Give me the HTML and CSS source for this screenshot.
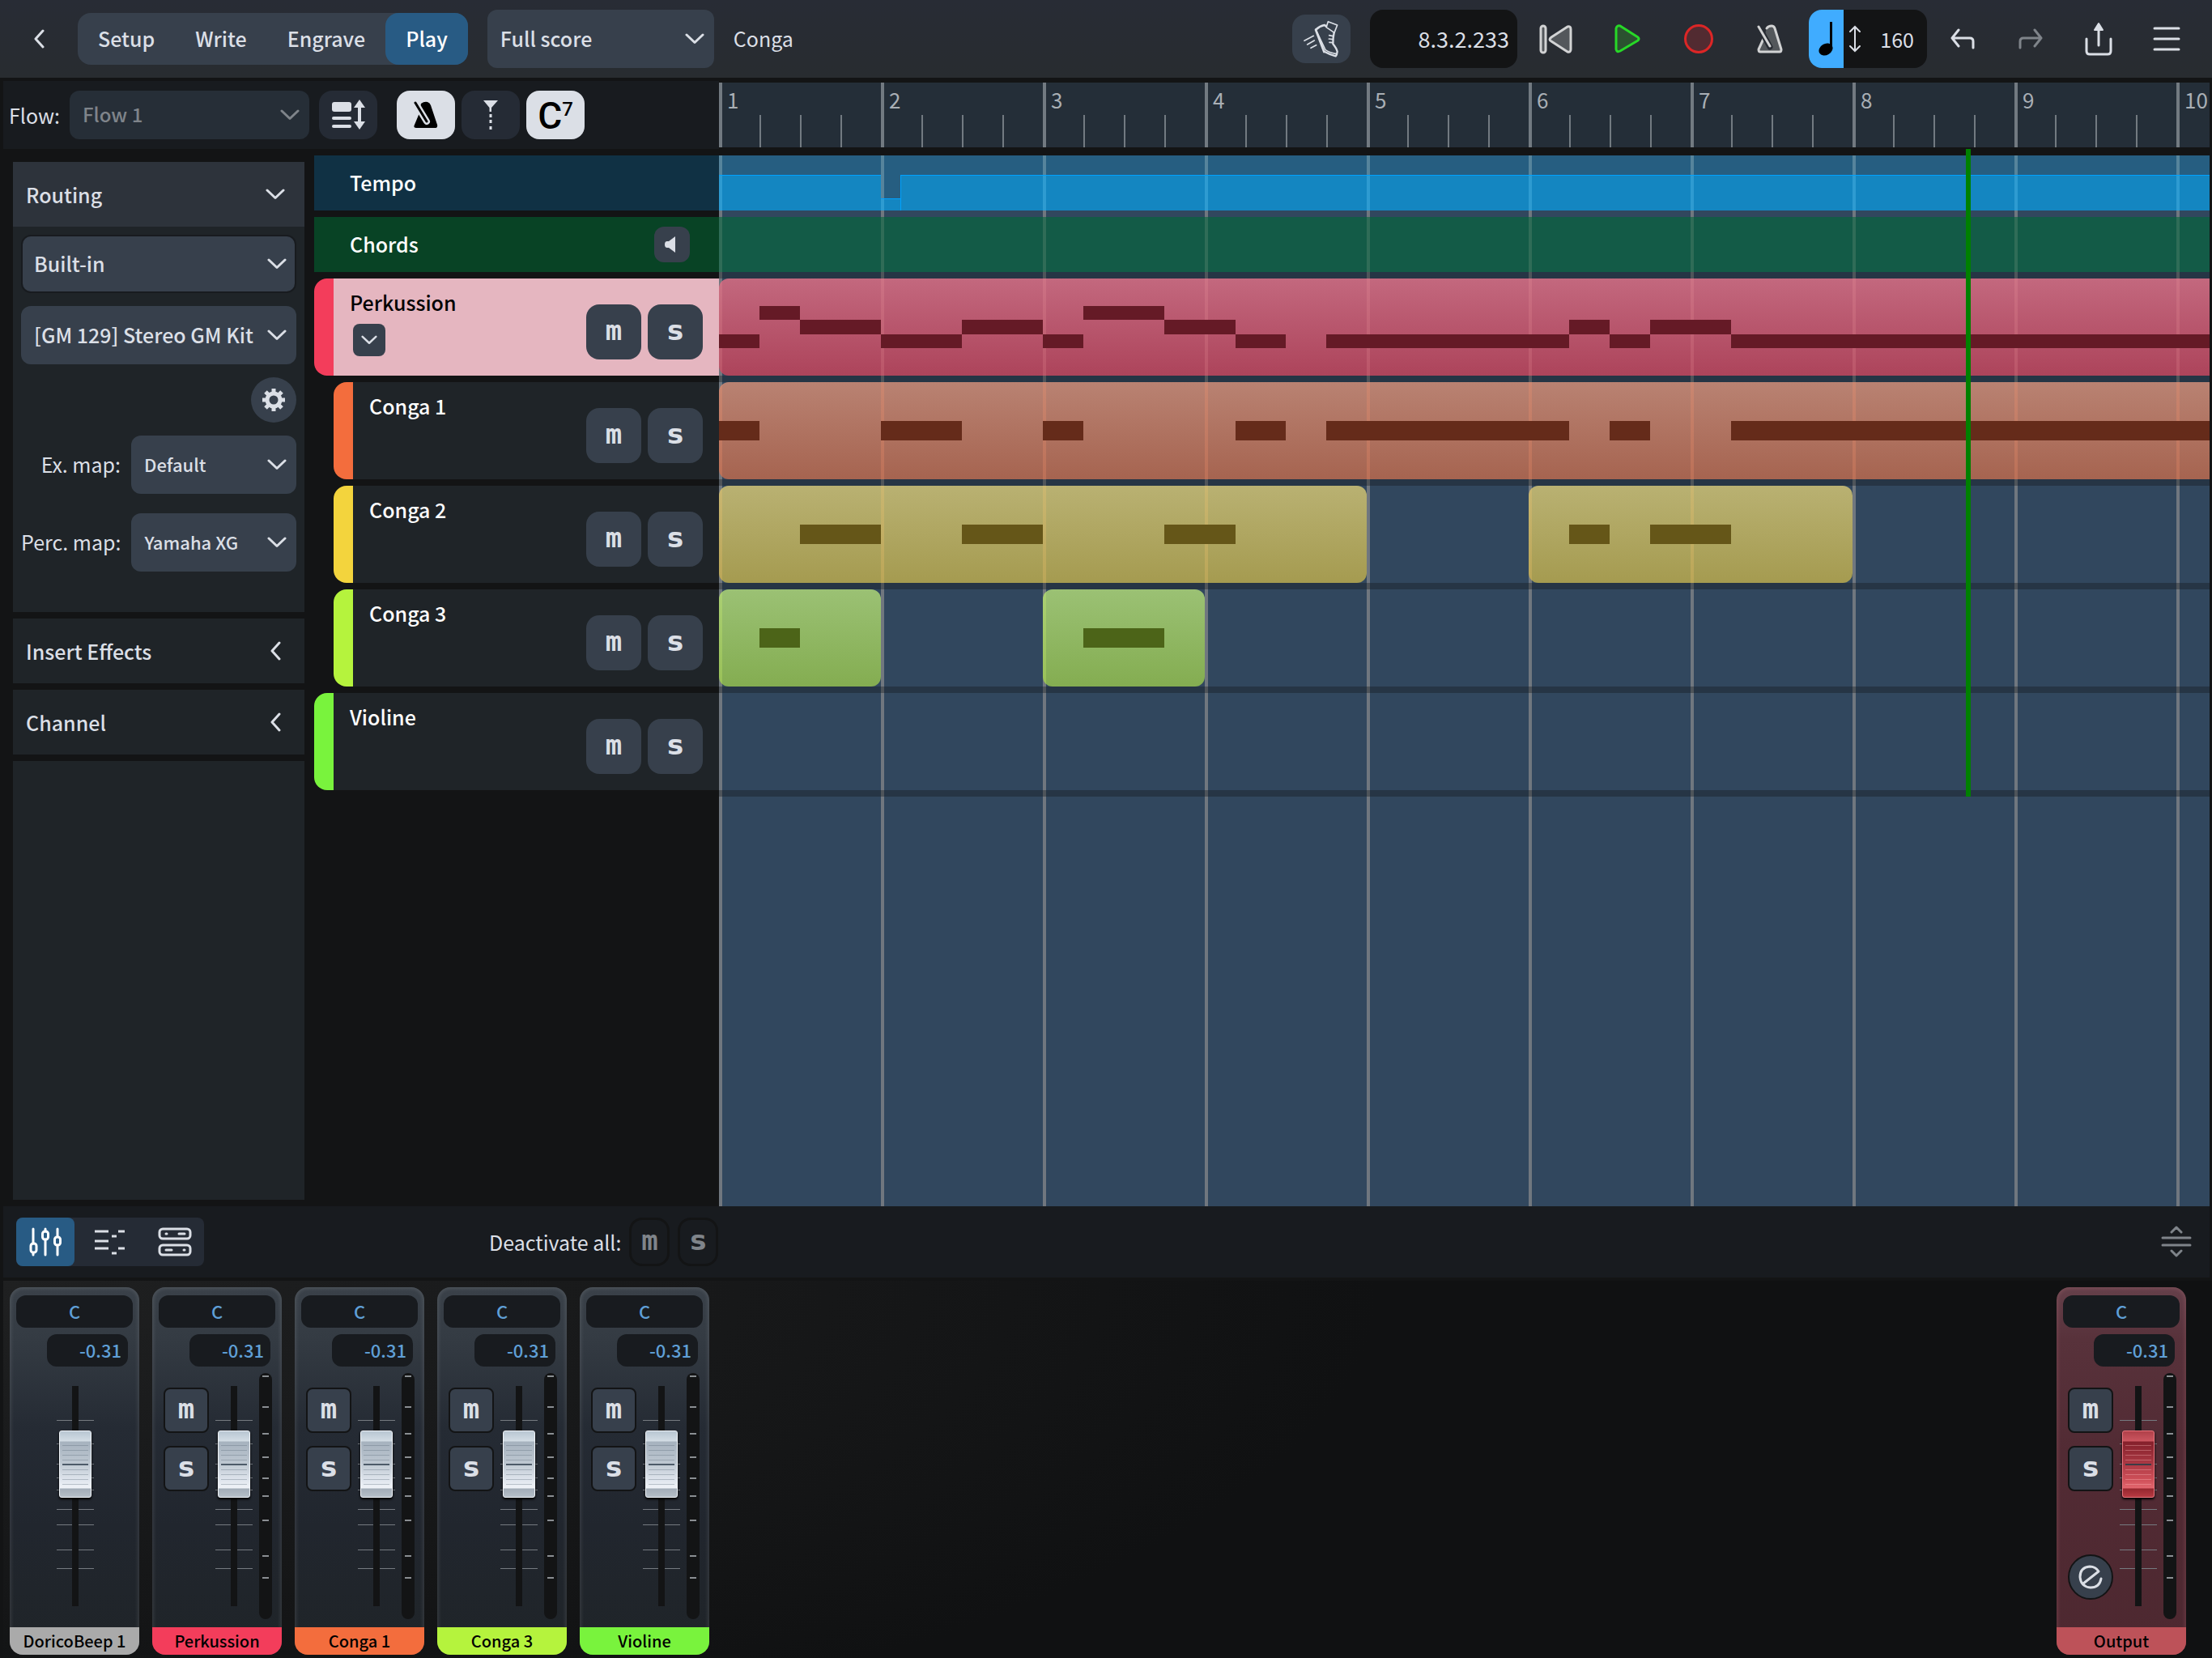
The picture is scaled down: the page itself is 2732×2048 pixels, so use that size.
FILE: index.html
```html
<!DOCTYPE html>
<html lang="en">
<head>
<meta charset="utf-8">
<title>Conga</title>
<link rel="stylesheet" href="styles.css">
</head>
<body>
<svg class="defs" aria-hidden="true">
  <symbol id="down" viewBox="0 0 24 14"><path d="M2 2l10 9.500L22 2" fill="none" stroke="currentColor" stroke-width="3" stroke-linecap="round" stroke-linejoin="round"/></symbol>
  <symbol id="left" viewBox="0 0 14 24"><path d="M12 2L3 12l9 10" fill="none" stroke="currentColor" stroke-width="3" stroke-linecap="round" stroke-linejoin="round"/></symbol>
</svg>

<header class="topbar">
  <button class="back" aria-label="Back"><svg width="14" height="24"><use href="#left"/></svg></button>
  <nav class="modes">
    <button>Setup</button><button>Write</button><button>Engrave</button><button class="active">Play</button>
  </nav>
  <div class="select layout-select">
    <select aria-label="Layout"><option>Full score</option></select>
    <svg width="24" height="14"><use href="#down"/></svg>
  </div>
  <h1 class="project">Conga</h1>

  <button class="shoe" aria-label="Jump bar">
    <svg width="46" height="46" viewBox="60 78 138 138" fill="none" stroke="#dbdfe6" stroke-linecap="round" stroke-linejoin="round"><path d="M154 83l34 13-11 28-30-20z" stroke-width="5"/><path d="M147 100l-7-4q-16 3-32 17l31 82" stroke-width="8"/><path d="M176 124q-4 18-4 42 13 16 16 28-1 12-6 17-20-5-42-17" stroke-width="7"/><path d="M108 112l36 76q14 10 38 14" stroke-width="5"/><path d="M158 134l14 3M157 147l14 2M159 160l13 1M66 154l34-18M77 168l26-15M90 181l20-11" stroke-width="5"/></svg>
  </button>
  <output class="time">8.3.2.233</output>
  <div class="transport">
    <button aria-label="Rewind"><svg width="42" height="38" viewBox="0 0 42 38" fill="#53575b" stroke="#d2d3d4" stroke-width="3" stroke-linejoin="round"><rect x="2" y="3" width="6" height="33" rx="3"/><path d="M15 17L35 4q4-1 4 3v25q0 4-4 3L15 22q-4-2 0-5z"/></svg></button>
    <button aria-label="Play"><svg width="32" height="36" viewBox="0 0 32 36" fill="#2b5230" stroke="#27d827" stroke-width="3" stroke-linejoin="round"><path d="M2 5q1-4 5-3l22 14q2 2 0 4L7 33q-4 2-5-2z"/></svg></button>
    <button aria-label="Record"><svg width="38" height="38" viewBox="0 0 38 38"><circle cx="19" cy="19" r="16.500" fill="#522b31" stroke="#dc2626" stroke-width="3"/></svg></button>
    <button aria-label="Click"><svg width="32" height="36" viewBox="0 0 32 36" fill="none" stroke-linecap="round" stroke-linejoin="round"><path d="M8 18L2 31q0 3 2 3h24q2 0 2-3L22 5q-1-3-4-3-4 0-6 3" fill="#53575b" stroke="#d2d3d4" stroke-width="3"/><path d="M3 4l13 24" stroke="#282c33" stroke-width="7"/><path d="M2 3l14 24" stroke="#d2d3d4" stroke-width="3"/></svg></button>
  </div>
  <div class="tempo-box">
    <button class="beat" aria-label="Beat unit"><svg width="20" height="42" viewBox="0 0 20 42"><ellipse cx="9" cy="34" rx="9" ry="7" transform="rotate(-30 9 34)"/><path d="M14 0h3v34h-3z"/></svg></button>
    <svg width="14" height="34" viewBox="0 0 14 34" fill="none" stroke="#dbdfe6" stroke-width="2" stroke-linecap="round"><path d="M7 2v30M1 8l6-6 6 6M1 26l6 6 6-6"/></svg>
    <span>160</span>
  </div>
  <div class="actions">
    <button aria-label="Undo"><svg width="30" height="26" viewBox="0 0 30 26" fill="none" stroke="#dbdfe6" stroke-width="3" stroke-linecap="round" stroke-linejoin="round"><path d="M10 2L2 12l8 10M2 12h22q4 0 4 4v8"/></svg></button>
    <button aria-label="Redo" disabled><svg width="30" height="26" viewBox="0 0 30 26" fill="none" stroke="#7f848a" stroke-width="3" stroke-linecap="round" stroke-linejoin="round"><path d="M20 2l8 10-8 10M28 12H6q-4 0-4 4v8"/></svg></button>
    <button aria-label="Share"><svg width="34" height="42" viewBox="0 0 34 42" fill="none" stroke="#dbdfe6" stroke-width="3" stroke-linecap="round" stroke-linejoin="round"><path d="M2 21v15q0 4 4 4h22q4 0 4-4V21M17 6v23"/><path d="M17 2l5 8H12z" fill="#dbdfe6" stroke-width="2"/></svg></button>
    <button aria-label="Menu"><svg width="34" height="30" viewBox="0 0 34 30" stroke="#dbdfe6" stroke-width="3" stroke-linecap="round"><path d="M2 2h30M2 15h30M2 28h30"/></svg></button>
  </div>
</header>

<main class="workspace">
  <div class="left">
    <div class="flowbar">
      <label for="flow">Flow:</label>
      <div class="select flow-select">
        <select id="flow" disabled><option>Flow 1</option></select>
        <svg width="24" height="14"><use href="#down"/></svg>
      </div>
      <button class="tool" aria-label="Track heights"><svg width="42" height="38" viewBox="0 0 42 38" fill="#dbdfe6"><rect x="1" y="3" width="24" height="12" rx="3"/><rect x="1" y="21" width="24" height="4" rx="2"/><rect x="1" y="31" width="24" height="4" rx="2"/><path d="M35 0l7 10h-5v17h5l-7 10-7-10h5V10h-5z"/></svg></button>
      <button class="tool on spaced" aria-label="Tempo track"><svg width="30" height="34" viewBox="0 0 30 34"><path d="M9 3q4-3 8-2 3 1 4 4l8 24q1 4-3 4H3q-4 0-2-4l5-12z"/><path d="M2 2l14 23" stroke="#dbdfe6" stroke-width="8" stroke-linecap="round"/><path d="M2 2l14 23" stroke="#000" stroke-width="3" stroke-linecap="round"/></svg></button>
      <button class="tool" aria-label="Markers"><svg width="20" height="38" viewBox="0 0 20 38" fill="#dbdfe6"><path d="M1 1h18l-8 9v5H8.500v-5zM8.500 18h3v4h-3zM8.500 25h3v4h-3zM8.500 33h3v4h-3z"/></svg></button>
      <button class="tool on chord" aria-label="Chords">C<sup>7</sup></button>
    </div>
    <div class="columns">
      <aside class="panel">
        <section class="routing">
          <h2><span>Routing</span><svg width="24" height="14"><use href="#down"/></svg></h2>
          <div class="routing-body">
            <div class="select outlined"><select aria-label="Instrument"><option>Built-in</option></select><svg width="24" height="14"><use href="#down"/></svg></div>
            <div class="select"><select aria-label="Preset"><option>[GM 129] Stereo GM Kit</option></select><svg width="24" height="14"><use href="#down"/></svg></div>
            <button class="gear" aria-label="Settings"><svg width="28" height="28" viewBox="0 0 28 28"><circle cx="14" cy="14" r="8" fill="none" stroke="#dbdfe6" stroke-width="5"/><path d="M14 0v5M14 23v5M0 14h5M23 14h5M4 4l4 4M20 20l4 4M24 4l-4 4M8 20l-4 4" stroke="#dbdfe6" stroke-width="5"/></svg></button>
            <div class="map-row"><label for="exmap">Ex. map:</label><div class="select small"><select id="exmap"><option>Default</option></select><svg width="24" height="14"><use href="#down"/></svg></div></div>
            <div class="map-row"><label for="percmap">Perc. map:</label><div class="select small"><select id="percmap"><option>Yamaha XG</option></select><svg width="24" height="14"><use href="#down"/></svg></div></div>
          </div>
        </section>
        <section><h2><span>Insert Effects</span><svg width="14" height="24"><use href="#left"/></svg></h2></section>
        <section><h2><span>Channel</span><svg width="14" height="24"><use href="#left"/></svg></h2></section>
        <section class="rest"></section>
      </aside>
      <div class="heads">
        <div class="head short tempo"><h3>Tempo</h3></div>
        <div class="head short chords"><h3>Chords</h3><button aria-label="Hear chords"><svg width="16" height="22" viewBox="0 0 16 22"><path d="M14 1v20L6 15H4q-3 0-3-4t3-4h2z" fill="#dbdfe6"/></svg></button></div>
        <div class="head selected c-red"><div><h3>Perkussion</h3><button class="expand" aria-label="Collapse"><svg width="20" height="12"><use href="#down"/></svg></button></div><button class="ms">m</button><button class="ms">s</button></div>
        <div class="head child c-orange"><h3>Conga 1</h3><button class="ms">m</button><button class="ms">s</button></div>
        <div class="head child c-yellow"><h3>Conga 2</h3><button class="ms">m</button><button class="ms">s</button></div>
        <div class="head child c-lime"><h3>Conga 3</h3><button class="ms">m</button><button class="ms">s</button></div>
        <div class="head c-green"><h3>Violine</h3><button class="ms">m</button><button class="ms">s</button></div>
      </div>
    </div>
  </div>

  <div class="right">
    <div class="ruler"><span>1</span><span>2</span><span>3</span><span>4</span><span>5</span><span>6</span><span>7</span><span>8</span><span>9</span><span>10</span></div>
    <div class="timeline">
      <div class="lane short tempo-lane"><i style="width:200px"></i><i class="dip" style="width:24px"></i><i class="fill"></i></div>
      <div class="lane short chord-lane"></div>
      <div class="lane">
        <div class="clip red open" style="--s:0">
          <b class="r3" style="--a:0;--n:1"></b><b class="r1" style="--a:1;--n:1"></b><b class="r2" style="--a:2;--n:2"></b><b class="r3" style="--a:4;--n:2"></b><b class="r2" style="--a:6;--n:2"></b><b class="r3" style="--a:8;--n:1"></b><b class="r1" style="--a:9;--n:2"></b><b class="r2" style="--a:11;--n:1.75"></b><b class="r3" style="--a:12.75;--n:1.25"></b><b class="r3" style="--a:15;--n:6"></b><b class="r2" style="--a:21;--n:1"></b><b class="r3" style="--a:22;--n:1"></b><b class="r2" style="--a:23;--n:2"></b><b class="r3" style="--a:25;--n:20"></b>
        </div>
      </div>
      <div class="lane">
        <div class="clip orange open" style="--s:0">
          <b style="--a:0;--n:1"></b><b style="--a:4;--n:2"></b><b style="--a:8;--n:1"></b><b style="--a:12.75;--n:1.25"></b><b style="--a:15;--n:6"></b><b style="--a:22;--n:1"></b><b style="--a:25;--n:20"></b>
        </div>
      </div>
      <div class="lane">
        <div class="clip yellow" style="--s:0;--l:16"><b style="--a:2;--n:2"></b><b style="--a:6;--n:2"></b><b style="--a:11;--n:1.75"></b></div>
        <div class="clip yellow" style="--s:20;--l:8"><b style="--a:1;--n:1"></b><b style="--a:3;--n:2"></b></div>
      </div>
      <div class="lane">
        <div class="clip green" style="--s:0;--l:4"><b style="--a:1;--n:1"></b></div>
        <div class="clip green" style="--s:8;--l:4"><b style="--a:1;--n:2"></b></div>
      </div>
      <div class="lane"></div>
      <div class="playhead"></div>
    </div>
  </div>
</main>

<div class="mixbar">
  <div class="views">
    <button class="active" aria-label="Mixer"><svg width="40" height="36" viewBox="0 0 40 36" fill="none" stroke="#fff" stroke-width="3" stroke-linecap="round"><path d="M5 2v18M5 32v2M20 2v3M20 15v19M35 2v9M35 22v12"/><rect x="2" y="20" width="7" height="11" rx="3"/><rect x="16.500" y="5" width="7" height="10" rx="3"/><rect x="31.500" y="12" width="7" height="10" rx="3"/></svg></button>
    <button aria-label="Key editor"><svg width="38" height="32" viewBox="0 0 38 32" stroke="#dbdfe6" stroke-width="3"><path d="M0 3h17M0 15h17M0 24h17M29 3h8M21 9h6M29 24h8M21 30h6"/></svg></button>
    <button aria-label="Rack"><svg width="42" height="36" viewBox="0 0 42 36" fill="none" stroke="#dbdfe6" stroke-width="3" stroke-linecap="round"><rect x="2" y="2" width="38" height="12" rx="4"/><rect x="2" y="22" width="38" height="12" rx="4"/><path d="M10 8h1M26 8h7M10 28h7M32 28h1"/></svg></button>
  </div>
  <div class="deactivate"><span>Deactivate all:</span><button class="ms" disabled>m</button><button class="ms" disabled>s</button></div>
  <button class="resize" aria-label="Resize panel"><svg width="38" height="40" viewBox="0 0 38 40" fill="none" stroke="#7f848a" stroke-width="3" stroke-linecap="round" stroke-linejoin="round"><path d="M2 15h34M2 24h34M13 8l6-6 6 6M13 31l6 6 6-6"/></svg></button>
</div>

<div class="mixer">
  <article class="strip beep">
    <span class="pan">C</span><span class="gain">-0.31</span>
    <div class="controls"><div class="fader"><input type="range" min="0" max="189" value="134" aria-label="DoricoBeep 1 volume"></div></div>
    <h4>DoricoBeep 1</h4>
  </article>
  <article class="strip s-red">
    <span class="pan">C</span><span class="gain">-0.31</span>
    <div class="controls"><div class="buttons"><button class="ms">m</button><button class="ms">s</button></div><div class="fader"><input type="range" min="0" max="189" value="134" aria-label="Perkussion volume"></div><div class="meter"></div></div>
    <h4>Perkussion</h4>
  </article>
  <article class="strip s-orange">
    <span class="pan">C</span><span class="gain">-0.31</span>
    <div class="controls"><div class="buttons"><button class="ms">m</button><button class="ms">s</button></div><div class="fader"><input type="range" min="0" max="189" value="134" aria-label="Conga 1 volume"></div><div class="meter"></div></div>
    <h4>Conga 1</h4>
  </article>
  <article class="strip s-lime">
    <span class="pan">C</span><span class="gain">-0.31</span>
    <div class="controls"><div class="buttons"><button class="ms">m</button><button class="ms">s</button></div><div class="fader"><input type="range" min="0" max="189" value="134" aria-label="Conga 3 volume"></div><div class="meter"></div></div>
    <h4>Conga 3</h4>
  </article>
  <article class="strip s-green">
    <span class="pan">C</span><span class="gain">-0.31</span>
    <div class="controls"><div class="buttons"><button class="ms">m</button><button class="ms">s</button></div><div class="fader"><input type="range" min="0" max="189" value="134" aria-label="Violine volume"></div><div class="meter"></div></div>
    <h4>Violine</h4>
  </article>
  <article class="strip output">
    <span class="pan">C</span><span class="gain">-0.31</span>
    <div class="controls"><div class="buttons"><button class="ms">m</button><button class="ms">s</button><button class="edit" aria-label="Edit"><svg width="30" height="30" viewBox="0 0 30 30" fill="none" stroke="#dbdfe6" stroke-width="3" stroke-linecap="round" stroke-linejoin="round"><path d="M6 23L25 8Q21 2 14 2 2 3 2 15q1 12 13 13 11 0 13-11"/></svg></button></div><div class="fader"><input type="range" min="0" max="189" value="134" aria-label="Output volume"></div><div class="meter"></div></div>
    <h4>Output</h4>
  </article>
</div>
</body>
</html>
```

FILE: styles.css
```css
:root {
  --text: #dbdfe6;
  --control: #37404c;
  --dark: #131415;
  --panel: #1f2428;
  --blue: #285b84;
  --beat: 50px;
}

* { box-sizing: border-box; }

body {
  margin: 0;
  min-height: 100vh;
  display: flex;
  flex-direction: column;
  background: var(--dark);
  color: var(--text);
  font-family: "Noto Sans CJK SC", "Noto Sans", sans-serif;
  font-size: 25px;
  font-weight: 500;
  line-height: 32px;
}

button, select, input { font: inherit; color: inherit; margin: 0; }
button { border: 0; padding: 0; background: none; display: flex; align-items: center; justify-content: center; }
h1, h2, h3, h4 { margin: 0; font: inherit; }
svg { display: block; flex: none; }
.defs { position: absolute; width: 0; height: 0; }

/* drop-downs */
.select { display: grid; align-items: center; height: 72px; border-radius: 12px; background: var(--control); }
.select select {
  grid-area: 1 / 1;
  width: 100%;
  height: 100%;
  padding: 0 0 2px 16px;
  border: 0;
  background: none;
  appearance: none;
  opacity: 1;
}
.select svg { grid-area: 1 / 1; justify-self: end; margin-right: 12px; pointer-events: none; }

/* mute / solo */
.ms {
  width: 68px;
  height: 68px;
  padding-bottom: 4px;
  border-radius: 16px;
  background: var(--control);
  font: bold 34px/32px "DejaVu Sans Mono", monospace;
}
.ms + .ms { font-family: "DejaVu Sans", sans-serif; }

/* top bar */
.topbar {
  display: flex;
  align-items: center;
  height: 96px;
  padding-right: 14px;
  background: linear-gradient(#282c35, #282c30);
}
.back { width: 96px; height: 72px; }
.modes { display: flex; height: 64px; border-radius: 16px; background: var(--control); }
.modes button { padding: 0 25px 2px; border-radius: 16px; }
.modes .active { background: var(--blue); color: #fff; }
.layout-select { width: 280px; margin: 0 24px; border-radius: 12px; }
.project { flex: 1; padding-bottom: 2px; font-weight: 400; }
.shoe { width: 72px; height: 60px; border-radius: 16px; background: var(--control); }
.time {
  width: 182px;
  margin: 0 4px 0 24px;
  padding-right: 10px;
  border-radius: 16px;
  background: var(--dark);
  font-size: 27px;
  font-weight: 400;
  line-height: 72px;
  text-align: right;
}
.transport, .actions { display: flex; }
.transport button { width: 88px; height: 72px; }
.actions button { width: 84px; height: 72px; }
.tempo-box {
  display: flex;
  align-items: center;
  gap: 7px;
  width: 146px;
  height: 72px;
  margin: 0 2px 0 4px;
  padding-right: 16px;
  overflow: hidden;
  border-radius: 16px;
  background: var(--dark);
  font-weight: 400;
}
.tempo-box span { flex: 1; text-align: right; }
.beat { width: 43px; height: 72px; background: #40acff; }

/* workspace */
.workspace { flex: 1; display: grid; grid-template-columns: 888px minmax(0, 1fr); padding-right: 3px; }
.left, .right { display: flex; flex-direction: column; min-width: 0; }
.flowbar {
  display: flex;
  align-items: center;
  gap: 8px;
  height: 84px;
  margin: 4px 0 8px 4px;
  padding-left: 7px;
  background: #181b1f;
}
.flowbar label { width: 67px; font-weight: 400; white-space: nowrap; }
.flow-select { width: 296px; height: 60px; margin-right: 4px; background: #262e37; color: #7f848a; font-size: 24px; border-radius: 12px; }
.tool { width: 72px; height: 60px; border-radius: 16px; background: #252b35; }
.tool.on { background: var(--text); color: #000; }
.spaced { margin-left: 16px; }
.chord { font: 500 46px/44px Roboto, sans-serif; align-items: flex-start; padding-top: 9px; }
.chord sup { font-size: 24px; line-height: 28px; }

.columns { flex: 1; display: flex; gap: 12px; padding-left: 16px; }
.panel { width: 360px; display: flex; flex-direction: column; gap: 8px; padding: 8px 0; }
.panel section { background: var(--panel); }
.panel .rest { flex: 1; }
.panel h2 { display: flex; align-items: center; justify-content: space-between; height: 80px; padding: 0 24px 0 16px; }
.panel h2 svg { width: 24px; }
.routing h2 { background: #2d333b; }
.routing-body { display: flex; flex-direction: column; gap: 16px; padding: 10px 10px 50px; }
.outlined { border: 2px solid #181b1f; }
.outlined select { padding-left: 14px; }
.outlined svg { margin-right: 10px; }
.gear { align-self: flex-end; width: 56px; height: 56px; border-radius: 50%; background: var(--control); }
.map-row { display: flex; align-items: center; justify-content: flex-end; gap: 13px; }
.map-row + .map-row { margin-top: 8px; }
.map-row label { padding-bottom: 2px; font-weight: 400; white-space: nowrap; }
.small { width: 204px; font-size: 22px; }

/* track heads */
.heads { flex: 1; display: flex; flex-direction: column; gap: 8px; }
.head {
  display: flex;
  align-items: center;
  gap: 8px;
  height: 120px;
  padding: 12px 20px;
  border-left: 24px solid var(--tab);
  border-radius: 16px 0 0 16px;
  background: var(--panel);
  color: #fff;
}
.head h3 { flex: 1; align-self: flex-start; margin-top: 1px; }
.head > div { flex: 1; align-self: flex-start; }
.head .ms { margin-top: 12px; color: var(--text); }
.head.child { margin-left: 24px; }
.head.short { height: 68px; padding: 0 36px 0 44px; border: 0; border-radius: 0; }
.head.short h3 { align-self: center; margin: 0; padding-bottom: 2px; }
.tempo { background: #103144; }
.chords { background: #084325; }
.chords button { width: 44px; height: 44px; border-radius: 12px; background: var(--control); padding-right: 4px; }
.selected { background: #e5b6c0; color: #000; }
.expand { width: 40px; height: 40px; margin: 11px 0 0 4px; border-radius: 8px; background: var(--control); color: var(--text); }
.c-red { --tab: #f33d5b; }
.c-orange { --tab: #f36d3d; }
.c-yellow { --tab: #f3d43d; }
.c-lime { --tab: #b5f33d; }
.c-green { --tab: #79f33d; }

/* ruler and timeline */
.ruler {
  display: flex;
  height: 80px;
  margin: 6px 0 10px;
  overflow: hidden;
  background:
    repeating-linear-gradient(90deg, #727a81 0 4px, transparent 4px 200px),
    repeating-linear-gradient(90deg, #727a81 0 2px, transparent 2px 50px) 0 40px,
    #242e38;
  background-repeat: no-repeat;
  color: #a9afb5;
  font-size: 26px;
  font-weight: 400;
  line-height: 42px;
}
.ruler span { flex: 0 0 200px; padding-left: 10px; }
.timeline {
  position: relative;
  flex: 1;
  background: repeating-linear-gradient(90deg, #70777f 0 4px, transparent 4px 200px) #31475e;
}
.lane { position: relative; height: 128px; overflow: hidden; border-bottom: 8px solid rgba(20, 22, 24, .36); background-clip: padding-box; }
.lane.short { height: 76px; }
.tempo-lane {
  display: flex;
  align-items: flex-end;
  border-bottom-color: transparent;
  background: repeating-linear-gradient(90deg, #56849c 0 4px, #265e81 4px 200px) padding-box;
}
.tempo-lane i { height: 44px; border-top: 1px solid #00a2ff; background: repeating-linear-gradient(90deg, #2e9bd1 0 4px, #1486c1 4px 200px); }
.tempo-lane .dip { height: 15px; }
.tempo-lane .fill { flex: 1; border-left: 1px solid #00a2ff; background: #1486c1 repeating-linear-gradient(90deg, transparent 0 175px, #2e9bd1 175px 179px, transparent 179px 200px); }
.chord-lane { background: repeating-linear-gradient(90deg, #2f6c57 0 4px, #135b47 4px 200px) padding-box; }
.clip {
  position: absolute;
  top: 0;
  left: calc(var(--s) * var(--beat));
  width: calc(var(--l) * var(--beat));
  height: 120px;
  overflow: hidden;
  border-radius: 12px;
  background: repeating-linear-gradient(90deg, var(--line) 0 4px, transparent 4px 200px), linear-gradient(var(--top), var(--bottom));
}
.clip.open { width: 100%; border-radius: 12px 0 0 12px; }
.clip b {
  position: absolute;
  top: 48px;
  left: calc(var(--a) * var(--beat));
  width: calc(var(--n) * var(--beat));
  height: 24px;
  background: var(--note);
}
.clip .r1 { top: 34px; height: 17px; }
.clip .r2 { top: 51px; height: 18px; }
.clip .r3 { top: 69px; height: 17px; }
.red { --top: #c3687e; --bottom: #ad445b; --note: #651a26; --line: rgba(255, 170, 170, .16); }
.orange { --top: #b98272; --bottom: #a66450; --note: #652b1a; --line: rgba(255, 150, 110, .24); }
.yellow { --top: #b9b172; --bottom: #a59b50; --note: #655618; --line: rgba(255, 200, 110, .24); }
.green { --top: #9bc174; --bottom: #84ad51; --note: #4c6418; --line: rgba(220, 255, 110, .24); }
.playhead { position: absolute; top: -8px; left: 1540px; width: 6px; height: 800px; background: #008000; }

/* mixer toolbar */
.mixbar { display: flex; align-items: center; height: 88px; margin: 0 3px 4px 4px; padding: 0 22px 0 16px; background: #181b1f; }
.views { display: flex; gap: 8px; border-radius: 8px; background: #252b35; }
.views button { width: 72px; height: 60px; border-radius: 8px; }
.views .active { background: var(--blue); }
.deactivate { flex: 1; display: flex; align-items: center; gap: 10px; padding-left: 352px; font-weight: 400; }
.deactivate .ms { width: 50px; height: 60px; border: 3px solid var(--dark); background: none; color: #7f848a; }
.resize { width: 38px; height: 60px; }

/* mixer */
.mixer {
  display: flex;
  gap: 16px;
  margin-left: 4px;
  padding: 8px 32px 4px 8px;
  background: radial-gradient(ellipse 1700px 600px at 0 0, #1f2021, #101112);
}
.strip {
  --edge: rgba(255, 255, 255, .1);
  display: flex;
  flex-direction: column;
  align-items: center;
  width: 160px;
  height: 454px;
  padding-top: 10px;
  overflow: hidden;
  border-radius: 16px;
  background: linear-gradient(#3a4149, #343b43 14%, #252b34 38%, #21262e 65%, #1f2428);
  box-shadow: inset 0 0 4px 2px var(--edge);
}
.pan, .gain { height: 40px; border-radius: 12px; background: #181b1f; color: #5f9fd6; font-size: 22px; line-height: 38px; text-align: center; }
.pan { width: 144px; }
.gain { align-self: flex-end; width: 100px; margin: 8px 14px 0 0; padding-right: 8px; text-align: right; }
.controls { flex: 1; align-self: stretch; display: flex; padding: 8px 12px 0 14px; }
.beep .controls { justify-content: center; padding: 8px 0 0 2px; }
.buttons { display: flex; flex-direction: column; gap: 16px; width: 56px; padding: 18px 0 34px; margin-right: 8px; }
.buttons button { width: 56px; height: 56px; border: 2px solid var(--dark); border-radius: 8px; background: var(--control); }
.buttons .edit { margin-top: auto; border-radius: 50%; }
.fader {
  --t: linear-gradient(#757a80, #757a80);
  width: 46px;
  height: 272px;
  margin-top: 16px;
  background:
    linear-gradient(var(--dark), var(--dark)) 50% 0 / 8px 100%,
    var(--t) 0 42px / 100% 1px, var(--t) 0 71px / 100% 1px, var(--t) 0 96px / 100% 1px,
    var(--t) 0 113px / 100% 1px, var(--t) 0 128px / 100% 1px, var(--t) 0 152px / 100% 1px,
    var(--t) 0 171px / 100% 1px, var(--t) 0 202px / 100% 1px, var(--t) 0 225px / 100% 1px;
  background-repeat: no-repeat;
}
.fader input {
  display: block;
  width: 46px;
  height: 272px;
  appearance: none;
  background: none;
  writing-mode: vertical-lr;
  direction: rtl;
}
.fader input::-webkit-slider-thumb {
  appearance: none;
  width: 40px;
  height: 83px;
  border: 1px solid #f0f4f8;
  border-radius: 3px;
  background:
    linear-gradient(#4d5b69, #4d5b69) 50% 40px / 32px 2px no-repeat,
    repeating-linear-gradient(transparent 0 5px, rgba(90, 105, 120, .35) 5px 6px) 50% 12px / 32px 54px no-repeat,
    linear-gradient(#b8c6d2, #d3dde5 12px, #a6b2be 13px, #bcc6d0 38px, #dfe5ed 60px, #f0f3f8 70px, #a3adb8 71px, #b5bfc8);
  box-shadow: 0 2px 3px #000;
}
.output .fader input::-webkit-slider-thumb {
  border-color: #e9757d;
  background:
    linear-gradient(#3c3c46, #3c3c46) 50% 40px / 32px 2px no-repeat,
    repeating-linear-gradient(transparent 0 5px, rgba(255, 190, 190, .35) 5px 6px) 50% 12px / 32px 54px no-repeat,
    linear-gradient(#b04049, #cc5660 12px, #84202b 13px, #a83742 38px, #cf5059 60px, #e2666e 70px, #96272f 71px, #b63a42);
}
.meter {
  --t: linear-gradient(#8a8e92, #8a8e92);
  width: 16px;
  height: 304px;
  margin-left: auto;
  border-radius: 8px;
  background:
    var(--t) 50% 3px / 8px 2px, var(--t) 50% 41px / 8px 2px, var(--t) 50% 74px / 8px 2px,
    var(--t) 50% 103px / 8px 2px, var(--t) 50% 129px / 8px 2px, var(--t) 50% 151px / 8px 2px,
    var(--t) 50% 181px / 8px 2px, var(--t) 50% 225px / 8px 2px, var(--t) 50% 252px / 8px 2px,
    var(--dark);
  background-repeat: no-repeat;
}
.strip h4 { width: 100%; height: 34px; background: var(--tab, #aaa); color: #000; font-size: 20px; line-height: 34px; text-align: center; }
.s-red { --tab: #f33d5b; }
.s-orange { --tab: #f36d3d; }
.s-lime { --tab: #b5f33d; }
.s-green { --tab: #79f33d; }
.output {
  --tab: #bd5259;
  --edge: rgba(255, 160, 170, .14);
  margin-left: auto;
  background: linear-gradient(#65404a, #58323b 14%, #522b34 45%, #4d2830);
}
```
